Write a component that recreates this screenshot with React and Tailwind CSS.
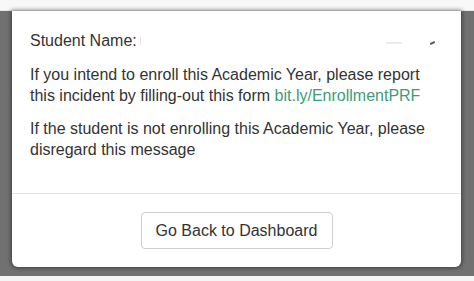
import React from "react";

export default function App() {
  return (
    <div
      className="w-[474px] h-[281px] overflow-hidden flex flex-col bg-[#717171]"
      style={{ fontFamily: '"Liberation Sans", Arial, sans-serif' }}
    >
      <div className="h-[11px] shrink-0 bg-[#f8f8f8] border-b border-[#e6e6e6]" />
      <div className="flex-1 pl-[12px] pr-[13px] pb-[9px] flex">
        <div className="flex-1 bg-white rounded-b-[6px] shadow-[0_0_4px_1px_rgba(0,0,0,0.45)] flex flex-col">
          <div className="flex-1 pl-[18px] pr-[16px] pt-[19px] text-[16px] leading-[21px] text-[#333333]">
            <div className="flex items-center">
              <span>Student Name:</span>
              <span className="ml-[3px] w-[1px] h-[8px] bg-[#e4e4e4]" />
              <span className="flex-1" />
              <span className="w-[16px] h-[2px] bg-[#ececec] mt-[4px]" />
              <span className="w-[28px]" />
              <span className="w-[5px] h-[2px] bg-[#555] -rotate-[25deg] mt-[4px] mr-[10px]" />
            </div>
            <p className="mt-[13px]">
              If you intend to enroll this Academic Year, please report this incident by filling-out this form{" "}
              <span className="text-[#3f9b79]">bit.ly/EnrollmentPRF</span>
            </p>
            <p className="mt-[12px]">
              If the student is not enrolling this Academic Year, please disregard this message
            </p>
          </div>
          <div className="h-[74px] shrink-0 border-t border-[#e5e5e5] flex items-center justify-center">
            <button className="w-[192px] h-[37px] border border-[#cfcfcf] rounded-[4px] bg-white text-[16px] text-[#333333]">
              Go Back to Dashboard
            </button>
          </div>
        </div>
      </div>
      <div className="h-[5px] shrink-0 bg-[#f5f5f5]" />
    </div>
  );
}
